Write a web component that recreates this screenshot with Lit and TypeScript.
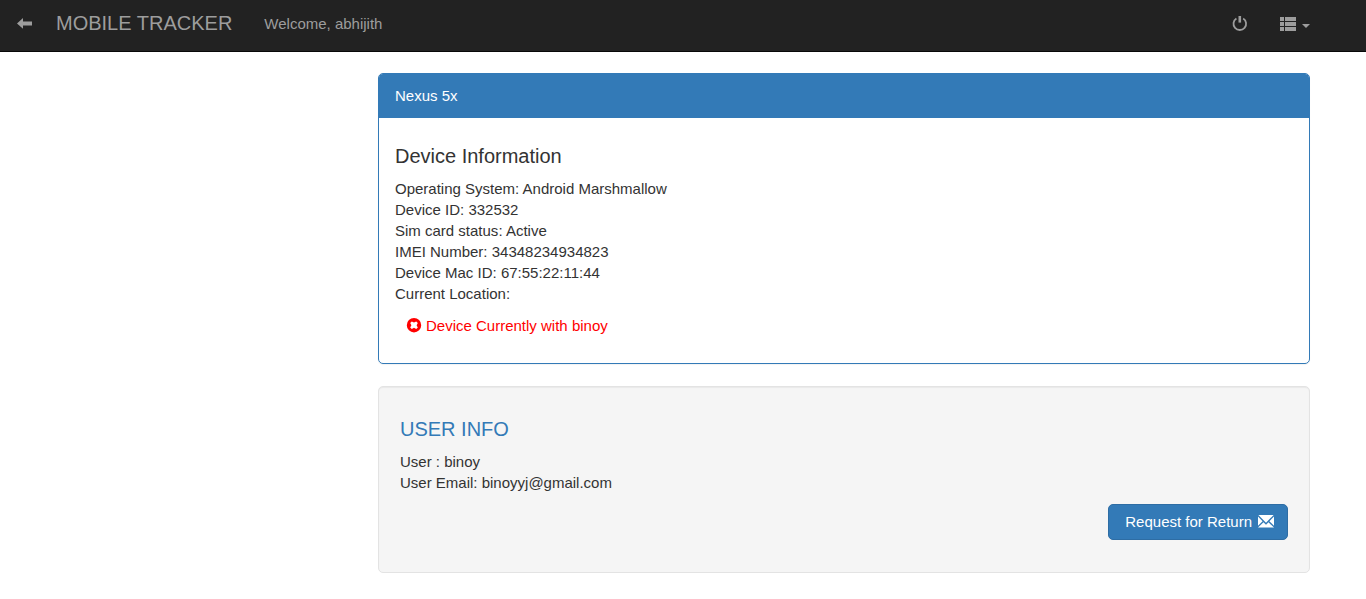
import { LitElement, html, css, svg } from "lit";
import { customElement, property, state } from "lit/decorators.js";

const icons: Record<string, unknown> = {
  back: svg`<path d="M1 7.5 7 2v3.4h9v4H7v3.4z" />`,
  power: svg`<path d="M6.5 0h2.6v6.6H6.5z" /><path d="M4.4 2.4A6.3 6.3 0 1 0 11.2 2.4" fill="none" stroke="currentColor" stroke-width="1.8" />`,
  list: svg`<path d="M0 1h4v4H0zM5 1h11v4H5zM0 6h4v4H0zM5 6h11v4H5zM0 11h4v4H0zM5 11h11v4H5z" />`,
  remove: svg`<path fill-rule="evenodd" d="M8 0a7.2 7.2 0 1 0 0 14.4A7.2 7.2 0 0 0 8 0zM5.8 3.4 8 4.6 10.2 3.4 11.8 5 10.6 7.2 11.8 9.4 10.2 11 8 9.8 5.8 11 4.2 9.4 5.4 7.2 4.2 5z" />`,
  mail: svg`<path d="M.4 1h15.2L8 8.7zM0 2.5 4.6 7.2 0 11.8zM16 2.5 11.4 7.2 16 11.8zM0 13.6 5.5 8.2 8 10.7 10.5 8.2 16 13.6z" />`,
};

@customElement("glyph-icon")
export class GlyphIcon extends LitElement {
  @property() name = "";

  static styles = css`
    :host {
      display: inline-block;
      width: 16px;
      height: 16px;
      flex: none;
    }
    .glyph {
      display: block;
      width: 100%;
      height: 100%;
      fill: currentColor;
    }
  `;

  render() {
    return html`<svg class="glyph" viewBox="0 0 16 16" aria-hidden="true">${icons[this.name]}</svg>`;
  }
}

@customElement("app-root")
export class AppRoot extends LitElement {
  @state() private device = {
    name: "Nexus 5x",
    holder: "binoy",
    email: "binoyyj@gmail.com",
    details: [
      ["Operating System", "Android Marshmallow"],
      ["Device ID", "332532"],
      ["Sim card status", "Active"],
      ["IMEI Number", "34348234934823"],
      ["Device Mac ID", "67:55:22:11:44"],
      ["Current Location", ""],
    ],
  };

  static styles = css`
    :host {
      display: block;
      color: #333;
      font: 15px/21px "Liberation Sans", Arial, sans-serif;
    }
    * {
      box-sizing: border-box;
    }
    .navbar {
      display: flex;
      align-items: center;
      justify-content: space-between;
      padding: 10px 56px 14px 16px;
      border-bottom: 1px solid #080808;
      background: #222;
      color: #9d9d9d;
    }
    .side {
      display: flex;
      align-items: center;
    }
    .link {
      display: flex;
      align-items: center;
      gap: 6px;
      padding: 0;
      border: 0;
      background: none;
      color: inherit;
      font: inherit;
      text-decoration: none;
      cursor: pointer;
    }
    .brand {
      margin: 0 32px 0 24px;
      font-size: 20px;
      line-height: 27px;
    }
    .actions {
      gap: 32px;
    }
    .caret {
      margin-top: 4px;
      border: 4px solid transparent;
      border-top-color: currentColor;
      border-bottom: 0;
    }
    .welcome {
      margin: 0;
    }
    .page {
      display: grid;
      grid-template-columns: 322px 1fr;
      padding: 21px 56px;
    }
    .content {
      display: grid;
      grid-column: 2;
      gap: 22px;
    }
    .panel {
      border: 1px solid #337ab7;
      border-radius: 5px;
      box-shadow: 0 1px 1px rgba(0, 0, 0, 0.05);
    }
    .heading {
      margin: 0;
      padding: 11px 16px 12px;
      border-radius: 4px 4px 0 0;
      background: #337ab7;
      color: #fff;
      font-size: 15px;
      font-weight: 400;
      line-height: 21px;
    }
    .body {
      padding: 27px 16px;
    }
    .title {
      margin: 0 0 11px;
      font-size: 20px;
      font-weight: 400;
      line-height: 22px;
    }
    .lines {
      margin: 0;
      padding: 0;
      list-style: none;
    }
    .status {
      display: flex;
      align-items: center;
      gap: 4px;
      margin: 11px 0 0;
      padding-left: 11px;
      color: #f00;
    }
    .well {
      padding: 31px 21px 32px;
      border: 1px solid #e3e3e3;
      border-radius: 5px;
      background: #f5f5f5;
      box-shadow: inset 0 1px 1px rgba(0, 0, 0, 0.05);
    }
    .user {
      color: #337ab7;
    }
    .footer {
      display: flex;
      justify-content: flex-end;
      margin-top: 11px;
    }
    .request {
      display: flex;
      align-items: center;
      gap: 6px;
      padding: 6px 13px 7px 16px;
      border: 1px solid #2e6da4;
      border-radius: 5px;
      background: #337ab7;
      color: #fff;
      font: inherit;
      cursor: pointer;
    }
  `;

  render() {
    const { name, holder, email, details } = this.device;
    return html`
      <nav class="navbar">
        <div class="side">
          <a class="link" href="#" aria-label="Back"><glyph-icon name="back"></glyph-icon></a>
          <a class="link brand" href="#">MOBILE TRACKER</a>
          <p class="welcome">Welcome, abhijith</p>
        </div>
        <div class="side actions">
          <button class="link" aria-label="Log out"><glyph-icon name="power"></glyph-icon></button>
          <button class="link" aria-label="Menu" aria-haspopup="true">
            <glyph-icon name="list"></glyph-icon><span class="caret"></span>
          </button>
        </div>
      </nav>
      <main class="page">
        <div class="content">
          <section class="panel">
            <h3 class="heading">${name}</h3>
            <div class="body">
              <h4 class="title">Device Information</h4>
              <ul class="lines">
                ${details.map(([label, value]) => html`<li>${label}: ${value}</li>`)}
              </ul>
              <p class="status"><glyph-icon name="remove"></glyph-icon>Device Currently with ${holder}</p>
            </div>
          </section>
          <section class="well">
            <h4 class="title user">USER INFO</h4>
            <ul class="lines">
              <li>User : ${holder}</li>
              <li>User Email: ${email}</li>
            </ul>
            <div class="footer">
              <button class="request">Request for Return<glyph-icon name="mail"></glyph-icon></button>
            </div>
          </section>
        </div>
      </main>
    `;
  }
}
